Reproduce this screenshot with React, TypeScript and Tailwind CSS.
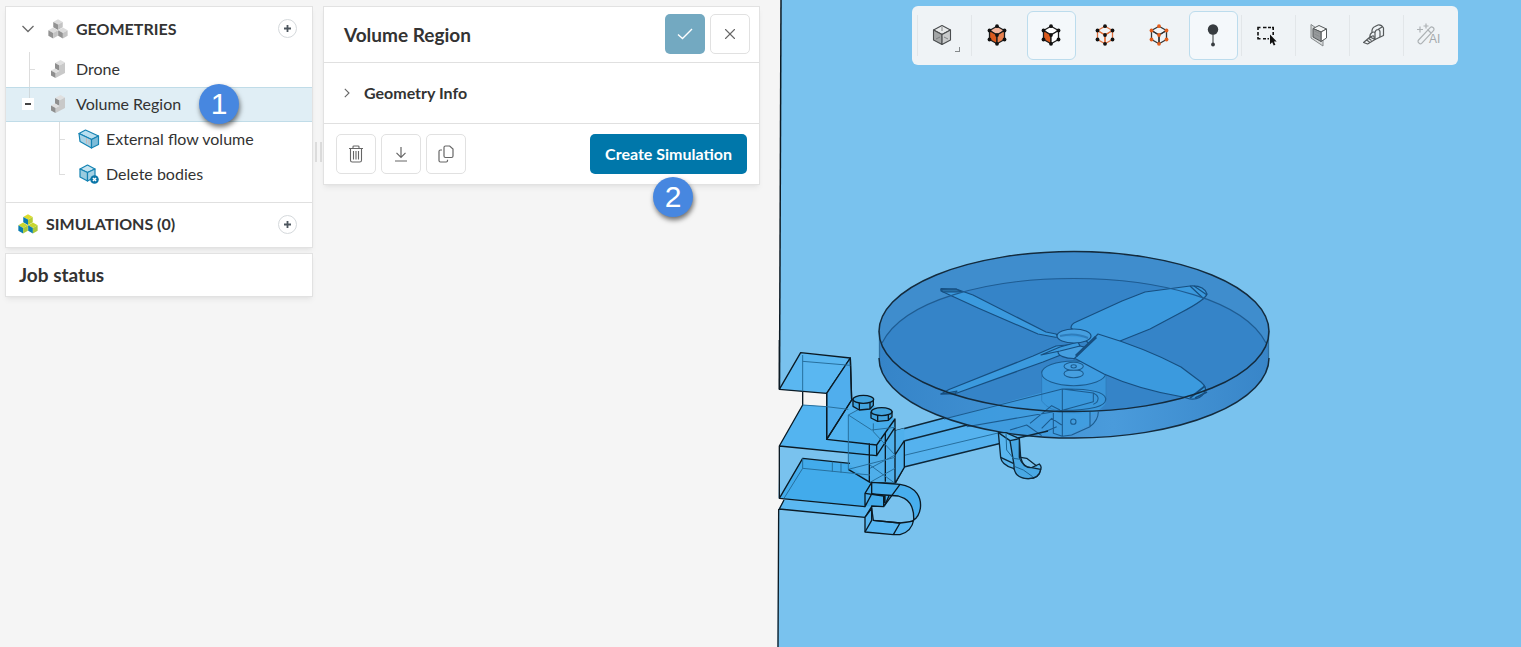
import React from 'react';
import { LuX } from 'react-icons/lu';

interface CubeProps {
    x: number;
    y: number;
    r: number;
    top: string;
    left: string;
    right: string;
}

// isometric cube centred on x / y
const Cube: React.FC<CubeProps> = ({ x, y, r, top, left, right }) => {
    const w = r * 0.88;
    const h = r / 2;
    return (
        <g>
            <polygon points={`${x},${y - r} ${x + w},${y - h} ${x},${y} ${x - w},${y - h}`} fill={top} />
            <polygon points={`${x - w},${y - h} ${x},${y} ${x},${y + r} ${x - w},${y + h}`} fill={left} />
            <polygon points={`${x + w},${y - h} ${x},${y} ${x},${y + r} ${x + w},${y + h}`} fill={right} />
        </g>
    );
};

const CubesIcon: React.FC<{ colors: string[][] }> = ({ colors }) => (
    <svg width="20" height="20" viewBox="0 0 20 20">
        {[[10, 5.6], [5.1, 14], [14.9, 14]].map(([x, y], i) => (
            <Cube key={i} x={x} y={y} r={5.4} top={colors[i][0]} left={colors[i][1]} right={colors[i][2]} />
        ))}
    </svg>
);

const GRAY = ['#dcdcdc', '#929292', '#c4c4c4'];
const GREEN = ['#c9d62f', '#0b7cb0', '#a9c83b'];
const YELLOW = ['#dcdc2c', '#0b7cb0', '#b5cc35'];

const GeometryIcon = () => (
    <svg width="16" height="20" viewBox="0 0 16 20">
        <polygon points="5,4 10.500,1 15,3.500 9.500,6.500" fill="#e0e0e0" />
        <polygon points="5,4 9.500,6.500 9.500,12 5,9.500" fill="#8f8f8f" />
        <polygon points="15,3.500 15,14 5.500,19 5.500,14 9.500,11.800 9.500,6.500" fill="#c9c9c9" />
        <polygon points="1,11.500 5,9.500 9.500,12 5.500,14" fill="#e0e0e0" />
        <polygon points="1,11.500 5.500,14 5.500,19 1,16.500" fill="#8f8f8f" />
    </svg>
);

const FlowVolumeIcon = () => (
    <svg width="22" height="20" viewBox="0 0 22 20" stroke="#1583b3" strokeWidth="1.200" strokeLinejoin="round">
        <polygon points="1,4.500 7.500,1 20.500,7 13.500,10.500" fill="#b9dff0" />
        <polygon points="1,4.500 13.500,10.500 13.500,19 2,12.500" fill="#a9d3e6" />
        <polygon points="13.500,10.500 20.500,7 20.500,15.500 13.500,19" fill="#7dbcd9" />
        <path d="M8.500 9v5.500M11 10.500v5" stroke="#c9b8b4" strokeWidth="1" />
    </svg>
);

const DeleteBodiesIcon = () => (
    <svg width="20" height="20" viewBox="0 0 20 20" strokeLinejoin="round">
        <g stroke="#1583b3" strokeWidth="1.200">
            <polygon points="1,5 8.500,1 16,5 8.500,8.500" fill="#c5e4f1" />
            <polygon points="1,5 8.500,8.500 8.500,17 1,13" fill="#9accdf" />
            <polygon points="8.500,8.500 16,5 16,13 8.500,17" fill="#a3d1e5" />
        </g>
        <circle cx="15.500" cy="15.500" r="4.300" fill="#0b76a8" />
        <path d="M13.900 13.900l3.200 3.200M17.100 13.900l-3.200 3.200" stroke="#fff" strokeWidth="1.400" />
    </svg>
);

interface WireCubeProps {
    line: string;
    dot: string;
    top?: string;
    left?: string;
    right?: string;
}

const DOTS = [[12, 3.2], [19.5, 7.5], [19.5, 16.5], [12, 20.8], [4.5, 16.5], [4.5, 7.5], [12, 12]];

const WireCube: React.FC<WireCubeProps> = ({ line, dot, top = 'none', left = 'none', right = 'none' }) => (
    <svg width="24" height="24" viewBox="0 0 24 24">
        <g stroke={line} strokeWidth="1.300" strokeLinejoin="round">
            <polygon points="12,3.200 19.500,7.500 12,12 4.500,7.500" fill={top} />
            <polygon points="4.500,7.500 12,12 12,20.800 4.500,16.500" fill={left} />
            <polygon points="19.500,7.500 12,12 12,20.800 19.500,16.500" fill={right} />
        </g>
        {DOTS.map(([x, y]) => (
            <circle key={`${x}-${y}`} cx={x} cy={y} r="1.900" fill={dot} />
        ))}
    </svg>
);

const ShadedCubeIcon = () => (
    <svg width="24" height="24" viewBox="0 0 24 24">
        <g stroke="#4a4d4f" strokeWidth="1.100" strokeLinejoin="round">
            <polygon points="11,2.500 19.500,7 11,11.500 2.500,7" fill="#e7e9ea" />
            <polygon points="2.500,7 11,11.500 11,21.500 2.500,17" fill="#a3a6a7" />
            <polygon points="19.500,7 11,11.500 11,21.500 19.500,17" fill="#c9cbcc" />
        </g>
        <path d="M11 4v4M11 14v5M5 16l4-2M17 16l-4-2" stroke="#6d7072" strokeWidth=".8" />
    </svg>
);

const ProbeIcon = () => (
    <svg width="24" height="26" viewBox="0 0 24 26">
        <path d="M12 8v14" stroke="#7d8284" strokeWidth="1.600" />
        <circle cx="12" cy="7.500" r="5.200" fill="#373c40" />
        <circle cx="12" cy="22.500" r="1.900" fill="#373c40" />
    </svg>
);

const BoxSelectIcon = () => (
    <svg width="24" height="24" viewBox="0 0 24 24">
        <path d="M3 7V4.500H5.500M8 4.500h3.500M13 4.500h3M17 4.500h1.200V7M18.200 9v3M3 9v3.500M3 14v1.800H5.500M8 15.800h3M12.500 15.800h1.500" fill="none" stroke="#111" strokeWidth="1.600" />
        <path d="M15 11.500v9.700l2.200-2 1.500 3.300 1.700-.8-1.500-3.200h2.800z" fill="#111" />
    </svg>
);

const ClipIcon = () => (
    <svg width="24" height="24" viewBox="0 0 24 24" stroke="#55595b" strokeWidth="1" strokeLinejoin="round">
        <polygon points="2,1.500 14,9.500 14,23 2,15" fill="#d7dadb" stroke="#85898b" />
        <polygon points="4,5.500 10,2.500 17.500,6 12,9" fill="#f2f4f5" />
        <polygon points="12,9 17.500,6 17.500,15 12,18.500" fill="#fff" />
        <polygon points="4,5.500 12,9 12,18.500 4,14" fill="#96999b" />
        <path d="M5.500 8l5 2.500M5.500 11l5 2.500" stroke="#85898b" strokeWidth=".7" />
    </svg>
);

const MeasureIcon = () => (
    <svg width="24" height="24" viewBox="0 0 24 24" fill="none" stroke="#55595b" strokeWidth="1.200" strokeLinejoin="round">
        <path d="M7 14.500Q6.500 11 9 9.500 8.500 5 12 3.500L15 2q3.500-.5 5.500 3v7.500L12 16.500Q11 16 11 13.500 10 12 7 14.500z" />
        <path d="M12 16.500V9.500Q12.500 6.500 15 6.500q2 .2 2 2.500v5M15 6.500L19 4M9 9.500q1.500-1 3 0" />
        <path d="M7 14L.600 19.500l4 1.500 7.400-4.500zM3.500 17l3 2M5.500 15.200l3 2.200" />
    </svg>
);

const MagicAiIcon = () => (
    <svg width="26" height="24" viewBox="1 0 26 24" fill="none" stroke="#adb2b5" strokeWidth="1.200">
        <rect x="-2" y="-11" width="4.500" height="21" rx="2" transform="translate(10.500 12.500) rotate(43)" />
        <path d="M12.500 6.500l3.500 3.500M5 3.500v6M2 6.500h6M11 .5v5M8.500 3h5" />
        <text x="14" y="20" fill="#a4a9ac" stroke="none" fontSize="12" fontFamily="Liberation Sans, sans-serif">AI</text>
    </svg>
);

const tools = [
    { name: 'Render mode', icon: <ShadedCubeIcon />, divider: true, corner: true },
    { name: 'Select volumes', icon: <WireCube line="#1c1c1c" dot="#111" top="#f3b59d" left="#db5a1d" right="#e9814f" />, divider: true },
    { name: 'Select faces', icon: <WireCube line="#1c1c1c" dot="#111" top="#fff" left="#db5a1d" right="#fff" />, active: true },
    { name: 'Select edges', icon: <WireCube line="#e2703c" dot="#111" /> },
    { name: 'Select vertices', icon: <WireCube line="#333" dot="#e35d1c" /> },
    { name: 'Probe point', icon: <ProbeIcon />, active: true },
    { name: 'Box selection', icon: <BoxSelectIcon />, divider: true },
    { name: 'Clipping plane', icon: <ClipIcon />, divider: true },
    { name: 'Measure', icon: <MeasureIcon />, divider: true },
    { name: 'AI tools', icon: <MagicAiIcon />, divider: true },
];

const Toolbar = () => (
    <div role="toolbar" className="relative flex gap-[5px] rounded-md bg-[#eff3f6] py-[5px] pr-1 pl-[7px]">
        {tools.map((tool) => (
            <div key={tool.name} className="relative">
                {tool.divider && <span className="absolute top-1 bottom-1 -left-[2px] w-px bg-[#e2e6e9]" />}
                <button
                    aria-label={tool.name}
                    className={`flex h-[49px] w-[49px] items-center justify-center rounded-md border pr-px pb-px ${tool.active ? 'border-[#bcdced] bg-[#f4f8fb]' : 'border-transparent'}`}
                >
                    {tool.icon}
                </button>
                {tool.corner && <span className="absolute right-2 bottom-2 h-[5px] w-[5px] border-r border-b border-[#85898b]" />}
            </div>
        ))}
    </div>
);

const StepBadge: React.FC<{ step: number; className: string }> = ({ step, className }) => (
    <span className={`absolute z-10 flex h-10 w-10 items-center justify-center rounded-full bg-[#4787e0] font-['Liberation_Sans',sans-serif] text-3xl text-white shadow-[1px_3px_5px_rgba(0,0,0,0.55)] ${className}`}>
        {step}
    </span>
);

const AddButton: React.FC<{ label: string }> = ({ label }) => (
    <button aria-label={label} className="ml-auto flex h-[19px] w-[19px] items-center justify-center rounded-full border border-[#d5d9dc] bg-white">
        <svg width="7" height="7" viewBox="0 0 7 7">
            <path d="M3.500 0v7M0 3.500h7" stroke="#4d565e" strokeWidth="1.800" />
        </svg>
    </button>
);

const rowClass = 'relative flex h-[35px] items-center pb-[2px]';

const GeometryTree = () => (
    <nav className="border border-[#e2e2e2] bg-white shadow-md shadow-black/5">
        <div className="flex h-[45px] items-center pr-[15px] pb-[2px] pl-4">
            <button aria-label="Collapse geometries" className="mr-[14px]">
                <svg width="12" height="8" viewBox="0 0 12 8">
                    <path d="M.5 1L6 6.500 11.500 1" fill="none" stroke="#6a6a6a" strokeWidth="1.300" />
                </svg>
            </button>
            <CubesIcon colors={[GRAY, GRAY, GRAY]} />
            <span className="ml-2 font-bold">GEOMETRIES</span>
            <AddButton label="Add geometry" />
        </div>
        <ul className="pb-[10px]">
            <li className={`${rowClass} pl-11`}>
                <span className="absolute top-0 left-[23px] h-full w-px bg-[#ddd]" />
                <span className="absolute top-[17px] left-[23px] h-px w-[6px] bg-[#ddd]" />
                <GeometryIcon />
                <span className="ml-[10px]">Drone</span>
            </li>
            <li className={`${rowClass} border-y border-[#c0dce8] bg-[#e0eef5] pl-11`}>
                <span className="absolute top-0 left-[23px] h-[10px] w-px bg-[#cfd8dc]" />
                <button aria-label="Collapse volume region" className="absolute left-4 flex h-3 w-3 items-center justify-center bg-white">
                    <span className="h-[2px] w-[6px] bg-[#444]" />
                </button>
                <GeometryIcon />
                <span className="ml-[10px]">Volume Region</span>
                <StepBadge step={1} className="left-[193px]" />
            </li>
            <li className={`${rowClass} pl-[72px]`}>
                <span className="absolute top-0 left-[53px] h-full w-px bg-[#ddd]" />
                <span className="absolute top-[17px] left-[53px] h-px w-[6px] bg-[#ddd]" />
                <FlowVolumeIcon />
                <span className="ml-[6px]">External flow volume</span>
            </li>
            <li className={`${rowClass} pl-[73px]`}>
                <span className="absolute top-0 left-[53px] h-[18px] w-[6px] border-b border-l border-[#ddd]" />
                <DeleteBodiesIcon />
                <span className="ml-[7px]">Delete bodies</span>
            </li>
        </ul>
        <div className="flex h-[45px] items-center border-t border-[#e0e0e0] pr-[15px] pb-[2px] pl-3">
            <CubesIcon colors={[YELLOW, GREEN, GREEN]} />
            <span className="ml-2 font-bold">SIMULATIONS (0)</span>
            <AddButton label="Add simulation" />
        </div>
    </nav>
);

const TrashIcon = () => (
    <svg width="16" height="18" viewBox="0 0 16 18" fill="none" stroke="#666" strokeWidth="1.100">
        <path d="M1 3.500h14M5 3.500V1.800Q5 1 6 1h4q1 0 1 .8v1.700M2.500 3.500v11.700q0 1.800 1.800 1.800h7.400q1.800 0 1.800-1.800V3.500M5.500 6v8.500M8 6v8.500M10.500 6v8.500" />
    </svg>
);

const DownloadIcon = () => (
    <svg width="14" height="16" viewBox="0 0 14 16" fill="none" stroke="#666" strokeWidth="1.200">
        <path d="M7 1v10M2.500 6.800L7 11.300l4.500-4.500M1 15h12" />
    </svg>
);

const CopyIcon = () => (
    <svg width="16" height="18" viewBox="0 0 16 18" fill="none" stroke="#666" strokeWidth="1.200">
        <path d="M7.500 1h4.200L15 4v7q0 1.500-1.500 1.500h-6Q6 12.500 6 11V2.500Q6 1 7.500 1z" />
        <path d="M4 5H2.500Q1 5 1 6.500v9Q1 17 2.500 17h5.700Q9.500 17 9.500 15.800v-1" />
    </svg>
);

const outlineButton = 'flex h-10 w-10 items-center justify-center rounded-[5px] border border-[#e1e1e1] bg-white text-[#666]';

const DetailsPanel = () => (
    <section className="relative border border-[#e2e2e2] bg-white shadow-md shadow-black/5">
        <header className="flex h-[56px] gap-[5px] border-b border-[#e0e0e0] pt-[7px] pr-[9px] pl-5">
            <h2 className="mr-auto text-[19px] leading-[42px] font-bold">Volume Region</h2>
            <button aria-label="Confirm" className="flex h-10 w-10 items-center justify-center rounded-[5px] bg-[#73a9c1]">
                <svg width="16" height="12" viewBox="0 0 16 12">
                    <path d="M1 6.500l4.500 4L15 1" fill="none" stroke="#fff" strokeWidth="1.400" />
                </svg>
            </button>
            <button aria-label="Close" className={outlineButton}>
                <LuX size={18} strokeWidth={1.5} />
            </button>
        </header>
        <div className="flex h-[60px] items-center pl-5">
            <button className="flex items-center gap-[14px] font-bold">
                <svg width="6" height="10" viewBox="0 0 6 10">
                    <path d="M.8 .8L5 5 .8 9.200" fill="none" stroke="#666" strokeWidth="1.100" />
                </svg>
                Geometry Info
            </button>
        </div>
        <footer className="flex h-[61px] items-center gap-[5px] border-t border-[#e0e0e0] px-3">
            <button aria-label="Delete" className={outlineButton}><TrashIcon /></button>
            <button aria-label="Download" className={outlineButton}><DownloadIcon /></button>
            <button aria-label="Copy" className={outlineButton}><CopyIcon /></button>
            <button className="ml-auto h-10 rounded-[5px] bg-[#0077aa] px-[15px] font-bold text-white">Create Simulation</button>
        </footer>
        <StepBadge step={2} className="top-[170px] right-[66px]" />
    </section>
);

// Flow domain with the drone arm and its rotor zone
const Scene = () => (
    <svg className="absolute inset-0 h-full w-full" viewBox="770 0 751 647" preserveAspectRatio="xMinYMin slice" fill="none" strokeLinejoin="round">
        <defs>
            <linearGradient id="rim" x1="0" x2="1">
                <stop offset="0" stopColor="#3584c8" />
                <stop offset=".6" stopColor="#4a9bdb" />
                <stop offset="1" stopColor="#3885c8" />
            </linearGradient>
        </defs>
        <path d="M781 0L779.500 389.500 802.500 391.500V405L779.500 446 778.500 498 784 499.500 778.500 509 777.500 647H1521V0z" fill="#79c2ee" />
        <path d="M802.500 391.500L826.500 393.500V406.500L802.500 405z" fill="#f4f4f4" />

        {/* arm */}
        <path d="M895 431L1048 390 1100 388 1106 400 1090 430 1045 432 1010 441 904 467 895 484z" fill="#55b2ee" />

        {/* rotor zone */}
        <path d="M879 331.500A195 80 0 0 1 1269 331.500V358A195 80 0 0 1 879 358z" fill="url(#rim)" />
        <ellipse cx="1074" cy="331.500" rx="195" ry="80" fill="#3f8dcd" />
        <path d="M881.500 345A195 80 0 0 1 1266.500 345A195 80 0 0 1 881.500 345z" fill="#3584c8" />

        {/* arm and motor seen through the rotor zone */}
        <path d="M944 419L1048 391Q1104 385 1105 400 1103 410 1090 416V424L1066 437 1010 434 966 425z" fill="#3f9fe2" fillOpacity=".75" />
        <path d="M1042 374A32 13 0 0 1 1106 374V401A32 13 0 0 1 1042 401z" fill="#3a98dc" fillOpacity=".85" />
        <g transform="translate(1030 315) scale(.33333)" stroke="#1c5b8e" strokeWidth="3.200">
            <ellipse cx="131" cy="175" rx="96" ry="37" fill="#3d9be0" />
            <path d="M35 175V258Q60 290 100 288M228 175V258" stroke="#2a78b8" strokeWidth="2" />
            <ellipse cx="131" cy="176" rx="29" ry="12" fill="#469fe0" />
            <ellipse cx="131" cy="154" rx="29" ry="12" fill="#469fe0" />
            <ellipse cx="131" cy="154" rx="8" ry="5" />
            <path d="M-258 312L97 222Q220 220 227 250 232 285 97 286L-190 335M97 222V362M97 222L190 234V260L97 286M190 234Q212 245 200 262L190 268M180 290V335M205 290Q205 315 180 335L125 360 97 364 70 355V290M0 325L65 272 90 285M35 340L65 310 95 330M45 350L80 335M-60 345L-10 330 35 362" />
            <circle cx="130" cy="320" r="8" />
        </g>
        <g fill="#3b9ade" stroke="#174f80" strokeWidth="1.200">
            <path d="M941 288.500L956 289 973 295 1046 332 1056 334Q1060 338 1054 337L1038 334 978 308 941 291z" />
            <path d="M941 289.500L956 289 962 292 943 292z" fill="#266da3" />
            <path d="M941 394L949 389.500 1033 356 1056 346 1078 344 1076 349 1043 362 957 393z" />
            <path d="M941 394L957 391 955 394z" fill="#266da3" />
            <path d="M1071 328Q1071 324 1076 322L1122 301 1145 292 1190 286Q1204 285 1207 294 1205 300 1182 312L1150 329 1120 341 1092 346z" />
            <path d="M1190 286L1204 299M1194 286L1207 295" />
            <ellipse cx="1074" cy="352" rx="16" ry="6.500" fill="#469fe0" />
            <path d="M1041 355L1060 347 1078 342 1080 346 1060 351z" />
            <ellipse cx="1074" cy="336" rx="17" ry="7" fill="#469fe0" />
            <path d="M1060 336Q1075 332 1088 338" stroke="#2f7dbb" strokeWidth="2" />
            <path d="M1074 359L1098 334Q1145 348 1181 367L1201 382Q1208 388 1204 393 1200 400 1190 399L1183 397Q1140 390 1104 374L1076 359z" />
            <path d="M1076 356L1096 337" strokeWidth="3" />
            <path d="M1205 386L1190 398M1207 392L1195 398" strokeWidth="1.800" />
            <path d="M882 343C925 257 1222 257 1266 343" fill="none" stroke="#1f5c92" />
        </g>
        <path d="M879.500 331V358M1268.500 331V358" stroke="#2f6f9f" strokeWidth="1.300" />
        <g stroke="#142b3d" strokeWidth="1.500">
            <ellipse cx="1074" cy="331.500" rx="195" ry="80" />
            <path d="M879 358A195 80 0 0 0 1269 358" />
        </g>

        {/* arm edges and landing foot */}
        <g stroke="#0e2738" strokeWidth="1.300">
            <path d="M895 431L944 418M904 441L967 425M904 467L1010 441M904 441V467L895 484M904 441L896 453M1018 438L1048 431" />
            <path d="M893 458L998 433" stroke="#276f9e" strokeWidth="1" />
        </g>
        <g transform="translate(930 370) scale(.33333)" stroke="#0e2738" strokeWidth="4">
            <path d="M205 188L228 188 268 206 272 262Q280 295 305 293L328 282Q336 290 332 298 328 325 295 326 275 327 258 303L250 295Q215 285 212 262z" fill="#5ab6ef" />
            <path d="M240 212L268 206V262Q280 295 305 293L332 298Q328 325 295 326 250 325 252 285z" fill="#49a8e4" />
            <path d="M205 188L240 212M212 262L250 280M272 262L290 265 320 288" />
            <path d="M228 190L230 240 250 265 272 268M255 290L280 300 308 320" stroke="#1d6594" strokeWidth="3" />
        </g>

        {/* drone body */}
        <g transform="translate(770 340) scale(.33333)" stroke="#0b1a24" strokeWidth="4">
            <g stroke="none">
                <path d="M28 318L98 195 170 200V298L322 315 375 237 375 430 300 425 285 500 28 475z" fill="#79c2ee" />
                <path d="M28 318L98 195 170 200 245 180 375 237 320 347z" fill="#53b4f0" />
                <path d="M28 475L98 355 235 370 300 425 385 430 345 500 285 500z" fill="#42abeb" />
                <path d="M42 480L285 500 305 500 285 532 28 507z" fill="#5bb8f1" />
                <path d="M235 225L300 190 375 237V430H300L235 388z" fill="#45aae9" fillOpacity=".8" />
                <path d="M375 272L403 265V382L375 430z" fill="#4fb0ec" />
            </g>
            <path d="M28 148L92 38 241 54 170 160z" fill="#5ab7f1" />
            <path d="M241 54L245 180 170 298V160z" fill="#50aeed" />
            <path d="M28 148V0M98 154V195L28 318 320 347V315L170 298V160M241 54L245 180 170 298M245 180L255 174M320 315L375 237V425L345 495M320 347L375 262M28 318V475L98 355 240 370M28 475L285 500M42 480L28 507 285 532 305 500M26 507L24 925M298 310V425M346 280V425M235 388L300 427 375 430M375 345L403 302M403 302V382L375 430" />
            <g stroke="#276f9e" strokeWidth="3">
                <path d="M98 45V154M98 64L241 76M170 200L235 208M98 195L170 200M98 355V385L300 405M187 365V395M213 368V398M98 385L42 475M235 225V388L375 352M235 225L300 190M235 225L305 270 375 262M310 250V275L375 345M300 375L375 430M375 345L300 385M300 427L375 385" />
            </g>
            <g fill="#43a5df">
                <path d="M249 178V199L268 210 300 207 310 196V176" />
                <ellipse cx="280" cy="178" rx="31" ry="12" />
                <path d="M268 188V210M300 187V207M303 215V234L323 244 355 241 366 230V213" />
                <ellipse cx="335" cy="215" rx="31" ry="12" />
                <path d="M323 226V244M355 225V241" />
            </g>
            <path d="M285 460L305 427 390 433C440 440 455 475 451 505Q447 530 431 540 433 492 403 475L385 468 305 462 285 500z" fill="#48aeed" />
            <path d="M285 532L305 505 310 541 390 549Q430 545 431 540 425 575 390 584L370 584 285 576z" fill="#58b7f2" />
            <path d="M285 460L341 468V500L305 498V541L285 576M305 427V462M341 500L390 433M310 541L390 549 370 584M305 462L341 468M345 465V490" />
        </g>
        <path d="M781 0L779.500 389" stroke="#0b1a24" strokeWidth="1.500" />
    </svg>
);

export default function App() {
    return (
        <main className="flex min-h-screen overflow-hidden bg-[#f5f5f5] font-['Lato',sans-serif] text-base text-[#333]">
            <aside className="mt-[6px] ml-[5px] flex w-[308px] shrink-0 flex-col gap-[5px]">
                <GeometryTree />
                <section className="flex h-11 items-center border border-[#e2e2e2] bg-white pl-[13px] shadow-md shadow-black/5">
                    <h2 className="text-[19px] font-bold">Job status</h2>
                </section>
            </aside>
            <div className="mt-[142px] flex h-5 w-[10px] shrink-0 justify-center gap-[3px]">
                <span className="w-[2px] bg-[#dcdcdc]" />
                <span className="w-[2px] bg-[#dcdcdc]" />
            </div>
            <div className="mt-[6px] w-[437px] shrink-0">
                <DetailsPanel />
            </div>
            <section aria-label="3D viewer" className="relative ml-[10px] min-w-0 flex-1">
                <Scene />
                <div className="flex justify-end pt-[6px] pr-[63px]">
                    <Toolbar />
                </div>
            </section>
        </main>
    );
}
